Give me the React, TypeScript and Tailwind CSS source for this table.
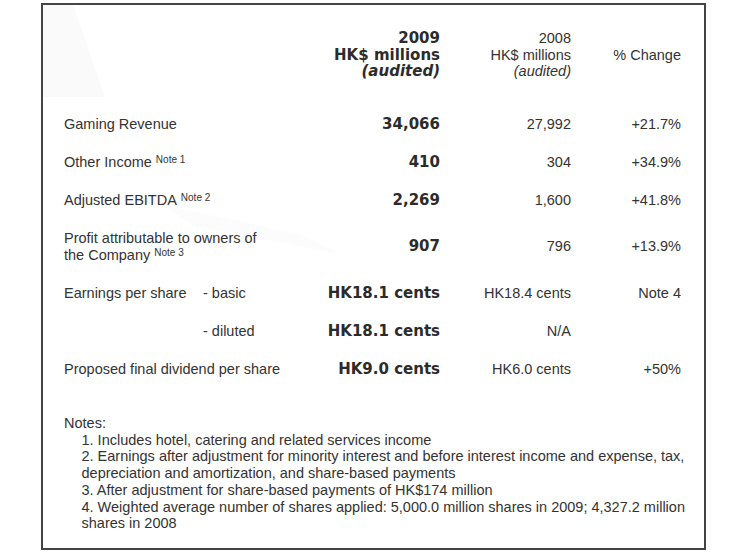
const label = "font-['Liberation_Sans',Arial,sans-serif] text-[14.5px] leading-[16.7px] text-[#333]";
const bold = "font-['DejaVu_Sans',Verdana,sans-serif] font-bold text-[15px] leading-[16.7px] text-[#2b2b2b]";

function Note({ n }: { n: number }) {
  return <span className="relative -top-[4px] text-[10px] leading-none ml-[4px]">Note {n}</span>;
}

type Row = {
  label: React.ReactNode;
  sub?: string;
  v2009: string;
  v2008: string;
  pct: string;
  h: string;
};

const rows: Row[] = [
  { label: 'Gaming Revenue', v2009: '34,066', v2008: '27,992', pct: '+21.7%', h: 'h-[38px]' },
  { label: <>Other Income<Note n={1} /></>, v2009: '410', v2008: '304', pct: '+34.9%', h: 'h-[38px]' },
  { label: <>Adjusted EBITDA<Note n={2} /></>, v2009: '2,269', v2008: '1,600', pct: '+41.8%', h: 'h-[38px]' },
  {
    label: <>Profit attributable to owners of<br />the Company<Note n={3} /></>,
    v2009: '907', v2008: '796', pct: '+13.9%', h: 'h-[55px]',
  },
  { label: 'Earnings per share', sub: '- basic', v2009: 'HK18.1 cents', v2008: 'HK18.4 cents', pct: 'Note 4', h: 'h-[38px]' },
  { label: '', sub: '- diluted', v2009: 'HK18.1 cents', v2008: 'N/A', pct: '', h: 'h-[38px]' },
  { label: 'Proposed final dividend per share', v2009: 'HK9.0 cents', v2008: 'HK6.0 cents', pct: '+50%', h: 'h-[38px]' },
];

export default function App() {
  return (
    <div className="w-[756px] h-[555px] bg-white pt-[3px] pl-[41px]">
      <div className="relative w-[665px] h-[547px] border-2 border-[#444] bg-white pl-[21px] overflow-hidden">
        {/* faint watermark */}
        <svg className="absolute left-0 top-0 pointer-events-none" width="320" height="300">
          <polygon points="0,0 30,0 62,92 0,92" fill="#fafafa" />
          <polygon points="120,200 260,230 300,250 150,220" fill="#fcfcfc" />
        </svg>

        <div className="relative">
          {/* header */}
          <div className="flex h-[100px] pt-[25px]">
            <div className="w-[256px]" />
            <div className={`w-[120px] text-right ${bold}`}>
              <div>2009</div>
              <div>HK$ millions</div>
              <div className="italic">(audited)</div>
            </div>
            <div className={`w-[131px] text-right ${label}`}>
              <div>2008</div>
              <div>HK$ millions</div>
              <div className="italic">(audited)</div>
            </div>
            <div className={`w-[110px] text-right ${label} pt-[16.7px]`}>% Change</div>
          </div>

          {rows.map((r, i) => (
            <div key={i} className={`flex items-center ${r.h}`}>
              <div className={`w-[256px] flex ${label}`}>
                {r.sub !== undefined ? (
                  <>
                    <span className="w-[139px]">{r.label}</span>
                    <span>{r.sub}</span>
                  </>
                ) : (
                  <span>{r.label}</span>
                )}
              </div>
              <div className={`w-[120px] text-right whitespace-nowrap ${bold}`}>{r.v2009}</div>
              <div className={`w-[131px] text-right ${label}`}>{r.v2008}</div>
              <div className={`w-[110px] text-right ${label}`}>{r.pct}</div>
            </div>
          ))}

          {/* notes */}
          <div className={`mt-[27px] pr-[14px] ${label}`}>
            <div>Notes:</div>
            <div className="pl-[17.5px]">
              <div>1. Includes hotel, catering and related services income</div>
              <div>2. Earnings after adjustment for minority interest and before interest income and expense, tax, depreciation and amortization, and share-based payments</div>
              <div>3. After adjustment for share-based payments of HK$174 million</div>
              <div>4. Weighted average number of shares applied: 5,000.0 million shares in 2009; 4,327.2 million shares in 2008</div>
            </div>
          </div>
        </div>
      </div>
    </div>
  );
}
